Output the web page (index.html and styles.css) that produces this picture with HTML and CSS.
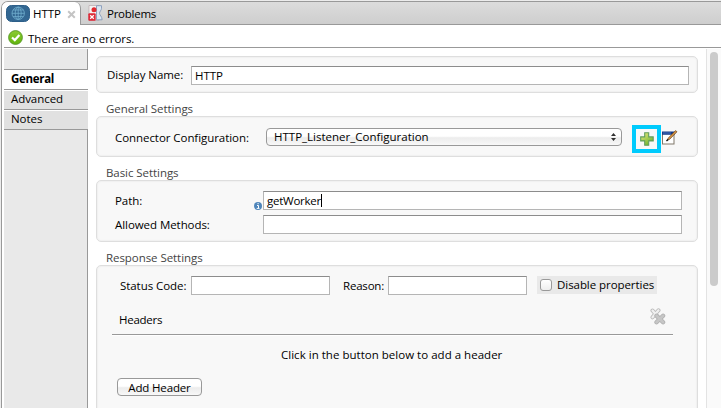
FILE: index.html
```html
<!DOCTYPE html>
<html lang="en">
<head>
<meta charset="utf-8">
<title>HTTP</title>
<link rel="stylesheet" href="styles.css">
</head>
<body>
<div class="window">
  <header class="tabs">
    <div class="tab active">
      <svg class="globe" width="24" height="17" viewBox="0 0 24 17"><rect x=".5" y=".5" width="23" height="16" rx="5" fill="#336792" stroke="#2d5f89"/><g fill="none" stroke="#72b0cf" stroke-width=".8"><circle cx="12.200" cy="8.300" r="6.200"/><ellipse cx="12.200" cy="8.300" rx="3" ry="6.200"/><path d="M12.200 2.100v12.400M6 8.300h12.400M7 5h10.400M7 11.600h10.400"/></g></svg>
      <span class="t-http">HTTP</span>
      <svg class="close" width="9" height="9" viewBox="0 0 9 9"><path d="M1.200 1.200l6.600 6.600M7.800 1.200L1.200 7.800" stroke="#c4c4c4" stroke-width="2"/></svg>
    </div>
    <div class="tab">
      <svg class="problems" width="16" height="17" viewBox="0 0 16 17"><path d="M1 .5h10v15H1z" fill="#f6f3f3" stroke="#b8a9ac" stroke-width=".7"/><path d="M8.500.7h5v2.600c0 2-2 3-2 5s2.600 3 2.600 6.500H8.500z" fill="#dce7f2" stroke="#8599b8" stroke-width=".9"/><circle cx="6" cy="4.800" r="2.500" fill="#e12b31"/><rect x=".3" y="8.300" width="7.400" height="7.400" rx="1" fill="#dd2938"/><path d="M2.200 10.200l3.600 3.600m0-3.600l-3.600 3.600" stroke="#fff" stroke-width="1.300"/></svg>
      <span class="t-problems">Problems</span>
    </div>
  </header>
  <div class="status">
    <svg width="15" height="15" viewBox="0 0 15 15"><defs><linearGradient id="ok" x2="0" y2="1"><stop stop-color="#8ccb32"/><stop offset="1" stop-color="#60b40c"/></linearGradient></defs><circle cx="7.500" cy="7.500" r="6.900" fill="url(#ok)" stroke="#58982a" stroke-width=".9"/><path d="M4 7.500l2.800 2.600 4.600-5" fill="none" stroke="#fff" stroke-width="2.200"/></svg>
    <span class="t-status">There are no errors.</span>
  </div>
  <div class="body">
    <nav class="side">
      <div class="fill top"></div>
      <div class="item on"><span class="t-general">General</span></div>
      <div class="item"><span class="t-adv">Advanced</span></div>
      <div class="item last"><span class="t-notes">Notes</span></div>
      <div class="fill rest"></div>
    </nav>
    <main class="content">
      <section class="group name">
        <label class="t-display">Display Name:</label><div class="field"><span class="t-http2">HTTP</span></div>
      </section>
      <h2 class="h-gen"><span class="t-gs">General Settings</span></h2>
      <section class="group config">
        <label class="t-conn">Connector Configuration:</label>
        <div class="select"><span class="t-listener">HTTP_Listener_Configuration</span><svg width="5" height="8" viewBox="0 0 5 8"><path d="M0 3L2.500 0 5 3zM0 5l2.500 3L5 5z" fill="#333"/></svg></div>
        <div class="plus"><svg width="14" height="14" viewBox="0 0 14 14"><defs><linearGradient id="pl" x2=".7" y2="1"><stop stop-color="#f0ec82"/><stop offset="1" stop-color="#69b02d"/></linearGradient></defs><path d="M4.700.7h4v4.200h4.500v4H8.700v4.400h-4V8.900H.7v-4h4z" fill="url(#pl)" stroke="#609d5c" stroke-width="1.100"/></svg></div>
        <svg class="edit" width="16" height="15" viewBox="0 0 16 15"><rect x=".5" y="2.500" width="11.500" height="11.500" fill="#fff" stroke="#80786a"/><path d="M0 1.500h12.500v3.200H0z" fill="#153985"/><path d="M1 3h8" stroke="#5d89da" stroke-width=".7"/><path d="M4.800 10.500l1.500-2.500L13.500.6l1.500 1.200-7.300 7.500z" fill="#d29545" stroke="#6c431e" stroke-width=".7"/><path d="M4.500 11l1.700-1.600" stroke="#111" stroke-width="1.300"/></svg>
      </section>
      <h2 class="h-basic"><span class="t-bs">Basic Settings</span></h2>
      <section class="group basic">
        <div class="row"><label class="t-path">Path:</label><svg class="info" width="8" height="8" viewBox="0 0 8 8"><circle cx="4" cy="4" r="4" fill="#4f86bb"/><path d="M3 3.500h1.500v2.500M2.700 6.400h2.800M3.500 1.700h1.200" fill="none" stroke="#fff" stroke-width="1"/></svg><div class="field"><span class="t-worker">getWorker</span><i class="caret"></i></div></div>
        <div class="row"><label class="t-allowed">Allowed Methods:</label><div class="field"></div></div>
      </section>
      <h2 class="h-resp"><span class="t-rs">Response Settings</span></h2>
      <section class="group response">
        <div class="codes">
          <label class="t-code">Status Code:</label><div class="field"></div>
          <label class="t-reason">Reason:</label><div class="field"></div>
          <div class="check"><i class="box"></i><span class="t-disable">Disable properties</span></div>
        </div>
        <div class="headers"><span class="t-headers">Headers</span>
          <svg width="16" height="17" viewBox="0 0 16 17"><g fill="none" stroke-linecap="round"><path d="M2.500 2.500l6 7M8.500 2.300l-6 7" stroke="#b9b9b9" stroke-width="4"/><path d="M2.500 2.500l6 7M8.500 2.300l-6 7" stroke="#f0f0f0" stroke-width="2.300"/><path d="M6.500 7.700l6.600 6.600M13.100 7.700l-6.600 6.600" stroke="#b0b0b0" stroke-width="4.300"/><path d="M6.500 7.700l6.600 6.600M13.100 7.700l-6.600 6.600" stroke="#c6c6c6" stroke-width="2.700"/></g></svg>
        </div>
        <p class="hint"><span class="t-click">Click in the button below to add a header</span></p>
        <button class="add"><span class="t-add">Add Header</span></button>
      </section>
    </main>
    <aside class="scroll"><div class="thumb"></div></aside>
  </div>
</div>
</body>
</html>
```
FILE: styles.css
```css
* { box-sizing: border-box; }
body { margin: 0; background: #ececec; color: #000; font: 11.5px/14px "Open Sans", "Noto Sans", sans-serif; letter-spacing: -.06px; overflow: hidden; }
span, label { white-space: nowrap; }
svg { display: block; flex: none; }
.window { width: 720px; height: 407px; margin: 1px 0 0 1px; display: flex; flex-direction: column; border-left: 1px solid #999; border-top: 1px solid #999; border-top-left-radius: 7px; background: #fff; overflow: hidden; }
.tabs { height: 23px; flex: none; display: flex; background: linear-gradient(#dcdcdc, #cecece); border-bottom: 1px solid #999; }
.tab { display: flex; align-items: center; }
.tab.active { width: 79px; height: 23px; background: #fff; padding: 0 0 0 4px; border-right: 1px solid #999; border-top-right-radius: 6px; }
.tab.active span { margin-left: 3px; width: 30px; }
.close { margin: 2px 0 0 4px; }
.problems { margin-left: 7px; }
.tab .t-problems { margin-left: 3px; letter-spacing: -.25px; }
.tab span { padding-top: 1px; }
.status { height: 23px; flex: none; border-bottom: 1px solid #999; margin-left: 2px; display: flex; padding: 5px 0 0 4px; }
.status span { margin: 2px 0 0 5px; }
.body { flex: 1; min-height: 0; display: flex; padding: 1px 0 0 2px; }
.side { width: 84px; flex: none; display: flex; flex-direction: column; }
.fill { background: #e9e9e9; border-right: 1px solid #999; }
.top { height: 21px; border-bottom: 1px solid #999; }
.rest { flex: 1; }
.item { height: 20px; background: #e1e1e1; border-bottom: 1px solid #999; border-top: 1px solid #fff; padding: 1px 0 0 7px; }
.item.on { background: #fff; font-weight: 700; letter-spacing: -.3px; }
.content { width: 602px; margin-left: 8px; flex: none; padding-top: 7px; }
.group { background: #f8f8f8; border: 1px solid #dedede; border-radius: 5px; box-shadow: inset 0 0 1px 1px #f0f0f0; display: flex; }
h2 { margin: 0; font-size: 11.5px; line-height: 14px; font-weight: 400; color: #444; height: 23px; padding: 9px 0 0 10px; }
.field { height: 19px; background: #fff; border: 1px solid #b5b5b5; border-top-color: #8c8c8c; padding: 2px 0 0 3px; display: flex; flex: none; }
.name { height: 37px; padding: 9px 0 0 10px; }
.name label { width: 84px; padding-top: 2px; }
.name .field { width: 498px; }
.config { height: 41px; padding: 0 0 0 18px; }
.config label { width: 151px; padding-top: 14px; }
.select { margin-top: 11px; width: 356px; height: 18px; border: 1px solid #999; border-radius: 4px; background: linear-gradient(#fff 45%, #ececec 55%, #f8f8f8); display: flex; justify-content: space-between; align-items: center; padding: 0 5px 0 7px; }
.t-listener { letter-spacing: 0; }
.plus { width: 29px; height: 28px; border: 4px solid #00cbfd; margin: 8px 0 0 10px; padding: 3px 0 0 4px; background: #f8f8f8; }
.edit { margin: 13px 0 0 1px; }
.basic { height: 62px; display: block; padding: 10px 0 0 18px; }
.row { display: flex; height: 24px; }
.row label { width: 148px; padding-top: 3px; }
.row .t-path { width: 139px; }
.info { margin: 11px 1px 0 0; }
.row .field { width: 419px; }
.t-worker { letter-spacing: -.25px; }
.caret { width: 1px; height: 13px; background: #000; }
.response { height: 148px; display: block; padding: 10px 0 0 15px; border-bottom-left-radius: 0; border-bottom-right-radius: 0; }
.codes { display: flex; height: 28px; padding-left: 8px; }
.codes label { padding-top: 3px; }
.codes .t-code { width: 71px; }
.codes .field { width: 139px; }
.codes .t-reason { margin-left: 13px; width: 45px; letter-spacing: -.2px; }
.check { width: 120px; height: 18px; margin-left: 10px; background: #e9e9e9; display: flex; padding: 3px; }
.box { flex: none; width: 12px; height: 12px; border: 1px solid #999; border-radius: 3px; background: linear-gradient(#fff, #eee); }
.check span { margin: -1px 0 0 5px; letter-spacing: -.06px; }
.headers { width: 561px; height: 32px; margin-top: -1px; border-bottom: 1px solid #999; box-shadow: 0 1px #fff; display: flex; justify-content: space-between; padding: 10px 7px 0 7px; }
.headers svg { margin-top: -5px; }
.t-headers { letter-spacing: -.25px; }
.hint { margin: 13px 0 0; padding-left: 169px; height: 30px; letter-spacing: .02px; }
.add { display: block; margin: 0 0 0 5px; width: 85px; height: 18px; padding: 0; border: 1px solid #999; border-radius: 4px; background: linear-gradient(#fff 45%, #ececec 55%, #f8f8f8); font: inherit; color: #000; line-height: 15px; letter-spacing: -.15px; }
.scroll { width: 15px; margin-left: 8px; flex: none; background: #fafafa; border-left: 1px solid #e3e3e3; padding: 3px 0 0 3px; }
.thumb { width: 8px; height: 234px; border-radius: 4px; background: #cbcbcb; }
```
